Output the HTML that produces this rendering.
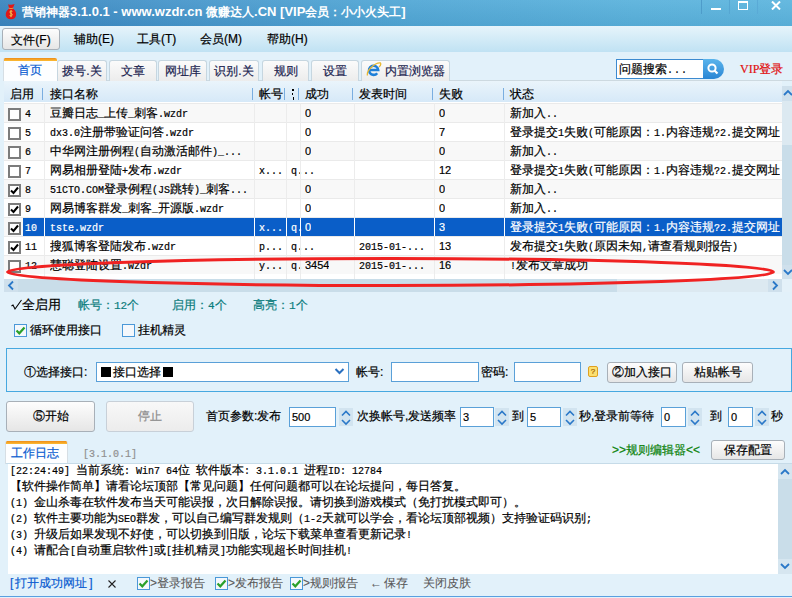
<!DOCTYPE html><html><head><meta charset="utf-8"><style>
*{box-sizing:border-box;margin:0;padding:0}
html,body{width:792px;height:598px;overflow:hidden}
body{position:relative;background:#e2f1fa;font-family:"Liberation Sans",sans-serif;font-size:12px;color:#000;-webkit-text-stroke-width:0.2px}
.a{position:absolute;white-space:nowrap}
.tt{font-size:13px}
.m{font-family:"Liberation Mono",monospace;font-size:10px}
.tab{top:60px;height:21px;border:1px solid #c6d6e0;border-bottom:none;border-radius:3px 3px 0 0;background:linear-gradient(#fbfbfb,#ececec);text-align:center;line-height:20px;color:#1c2450}
.mi{top:28px;height:22px;line-height:22px}
.hd{top:83px;height:20px;line-height:22px;color:#000}
.sep{top:88px;width:1px;height:12px;background:#7aaee0}
.row{left:4px;width:778px;height:19px;border-top:1px solid #eaeaea}
.cl{top:103px;width:1px;height:176px;background:#ececec}
.c{line-height:21px;height:19px;overflow:hidden}
.cb{width:13px;height:13px;border:2px solid #7c7c7c;background:#fff}
.btn{border:1px solid #a8b0b8;border-radius:3px;background:linear-gradient(#fdfdfd,#e6e6e6);text-align:center}
.inp{background:#fff;border:1px solid #5aa0d8}
.spin{width:14px;height:19px;background:#d0e4f0}
.log{font-family:"Liberation Sans",sans-serif;font-size:12px;line-height:16px;height:16px}
</style></head><body>
<div class="a" style="left:0;top:0;width:792px;height:26px;background:linear-gradient(rgba(255,255,255,0.06),rgba(0,40,80,0.06)),linear-gradient(to right,#3a86c0 0%,#4898cc 25%,#52a8d6 52%,#5ab2dc 80%,#5db5de 100%)"></div>
<svg class="a" style="left:5px;top:3px" width="12" height="17" viewBox="0 0 12 17"><path d="M3.2 1.2 Q6 2.4 9.6 1 L8.2 4.6 Q7.2 5.4 8.4 5.8 Q11.6 8.4 11 12.6 Q10.4 16.2 6 16.2 Q1.4 16.2 0.8 12.6 Q0.4 8.4 3.8 5.8 Q4.8 5.2 3.8 4.6 Z" fill="#e01818"/><path d="M3.8 5.2 Q6 6 8.2 5.2" stroke="#f0b040" stroke-width="0.8" fill="none"/><path d="M7.4 8.4 Q6 7.4 4.9 8.6 Q4.6 9.8 6 10.3 Q7.5 10.9 7.2 12.2 Q6.4 13.6 4.6 12.6 M6 7.2 V14.2" stroke="#f2c24a" stroke-width="1" fill="none"/></svg>
<div class="a" style="left:22px;top:4px;font-size:12px;font-weight:bold;color:#fff;line-height:16px;-webkit-text-stroke-width:0">营销神器<span class="tt">3.1.0.1 - www.wzdr.cn </span>微赚达人<span class="tt">.CN [VIP</span>会员：小小火头工<span class="tt">]</span></div>
<div class="a" style="left:701px;top:0;width:1px;height:14px;background:#4e9cca"></div>
<div class="a" style="left:729px;top:0;width:1px;height:14px;background:#56a6d2"></div>
<div class="a" style="left:757px;top:0;width:1px;height:14px;background:#5aaad6"></div>
<div class="a" style="left:711px;top:8px;width:10px;height:2px;background:#fff"></div>
<div class="a" style="left:738px;top:1px;width:10px;height:9px;border:1.5px solid #fff;border-top-width:2.5px"></div>
<svg class="a" style="left:771px;top:1px" width="10" height="9" viewBox="0 0 10 9"><path d="M1 0.5 L9 8.5 M9 0.5 L1 8.5" stroke="#fff" stroke-width="2"/></svg>
<div class="a" style="left:0;top:26px;width:792px;height:26px;background:linear-gradient(#e6f4fb,#c0e2f3)"></div>
<div class="a mi btn" style="left:2px;width:58px">文件(F)</div>
<div class="a mi" style="left:74px">辅助(E)</div>
<div class="a mi" style="left:137px">工具(T)</div>
<div class="a mi" style="left:200px">会员(M)</div>
<div class="a mi" style="left:267px">帮助(H)</div>
<div class="a" style="left:3px;top:80px;width:789px;height:1px;background:#cdd9e0"></div>
<div class="a" style="left:3px;top:58px;width:54px;height:23px;background:linear-gradient(#ee8c18 0,#fcbc34 3px,#fdfeff 3px);border-left:1px solid #d6dee4;border-radius:2px 2px 0 0;color:#0a5cd0;text-align:center;line-height:24px;padding-right:2px">首页</div>
<div class="a tab" style="left:57px;width:50px">拨号.关</div>
<div class="a tab" style="left:109px;width:48px">文章</div>
<div class="a tab" style="left:158px;width:49px">网址库</div>
<div class="a tab" style="left:209px;width:50px">识别.关</div>
<div class="a tab" style="left:262px;width:47px">规则</div>
<div class="a tab" style="left:311px;width:48px">设置</div>
<div class="a tab" style="left:361px;width:89px;text-align:left;padding-left:23px">内置浏览器</div>
<svg class="a" style="left:366px;top:61px" width="16" height="16" viewBox="0 0 16 16"><path d="M3.6 9 H12.2 A4.6 4.6 0 1 0 11.2 12.2" stroke="#1f7fd8" stroke-width="2.6" fill="none"/><path d="M1.5 14.5 Q0.5 11 5 6.5 Q10.5 1.5 14.5 2 Q15.5 3.5 13 6" stroke="#e8b830" stroke-width="1.3" fill="none"/></svg>
<div class="a" style="left:616px;top:59px;width:88px;height:20px;border:1px solid #3c8ad0;background:#fff;line-height:18px;padding-left:2px">问题搜索<span class="m" style="letter-spacing:1px">...</span></div>
<div class="a" style="left:703px;top:59px;width:21px;height:20px;border-radius:0 10px 10px 0;background:linear-gradient(#5ab4ec,#2a86d4)"></div>
<svg class="a" style="left:706px;top:62px" width="14" height="14" viewBox="0 0 14 14"><circle cx="6" cy="6" r="3.6" stroke="#fff" stroke-width="2" fill="none"/><path d="M8.5 8.5 L11.5 11.5" stroke="#fff" stroke-width="2.2"/></svg>
<div class="a" style="left:740px;top:61px;color:#e01010;line-height:16px"><span style="font-family:'Liberation Serif',serif;font-size:12px">VIP</span>登录</div>
<div class="a" style="left:4px;top:81px;width:778px;height:21px;background:linear-gradient(#eaf4fb,#d6e9f8)"></div>
<div class="a hd" style="left:10px">启用</div>
<div class="a hd" style="left:50px">接口名称</div>
<div class="a hd" style="left:259px">帐号</div>
<div class="a hd" style="left:305px">成功</div>
<div class="a hd" style="left:359px">发表时间</div>
<div class="a hd" style="left:439px">失败</div>
<div class="a hd" style="left:510px">状态</div>
<div class="a sep" style="left:42px"></div>
<div class="a sep" style="left:252px"></div>
<div class="a sep" style="left:284px"></div>
<div class="a sep" style="left:298px"></div>
<div class="a sep" style="left:352px"></div>
<div class="a sep" style="left:432px"></div>
<div class="a sep" style="left:503px"></div>
<div class="a" style="left:292px;top:89px;width:2px;height:2px;background:#000"></div>
<div class="a" style="left:292px;top:93px;width:1px;height:2px;background:#000"></div>
<div class="a" style="left:293px;top:97px;width:1px;height:3px;background:#000"></div>
<div class="a" style="left:4px;top:102px;width:778px;height:177px;background:#fff"></div>
<div class="a row" style="top:103px;background:#f8f8f8"></div>
<div class="a cb" style="left:8px;top:108px"></div>
<div class="a c" style="left:25px;top:103px;color:#000"><span class="m">4</span></div>
<div class="a c" style="left:50px;top:103px;color:#000">豆瓣日志<span class="m">_</span>上传<span class="m">_</span>刺客<span class="m">.wzdr</span></div>
<div class="a c" style="left:305px;top:103px;color:#000;font-size:11px">0</div>
<div class="a c" style="left:439px;top:103px;color:#000;font-size:11px">0</div>
<div class="a c" style="left:510px;top:103px;color:#000">新加入<span class="m">..</span></div>
<div class="a row" style="top:122px;background:#fff"></div>
<div class="a cb" style="left:8px;top:127px"></div>
<div class="a c" style="left:25px;top:122px;color:#000"><span class="m">5</span></div>
<div class="a c" style="left:50px;top:122px;color:#000"><span class="m">dx3.0</span>注册带验证问答<span class="m">.wzdr</span></div>
<div class="a c" style="left:305px;top:122px;color:#000;font-size:11px">0</div>
<div class="a c" style="left:439px;top:122px;color:#000;font-size:11px">7</div>
<div class="a c" style="left:510px;top:122px;color:#000">登录提交<span class="m">1</span>失败<span class="m">(</span>可能原因：<span class="m">1.</span>内容违规<span class="m">?2.</span>提交网址</div>
<div class="a row" style="top:141px;background:#f8f8f8"></div>
<div class="a cb" style="left:8px;top:146px"></div>
<div class="a c" style="left:25px;top:141px;color:#000"><span class="m">6</span></div>
<div class="a c" style="left:50px;top:141px;color:#000">中华网注册例程<span class="m">(</span>自动激活邮件<span class="m">)_...</span></div>
<div class="a c" style="left:305px;top:141px;color:#000;font-size:11px">0</div>
<div class="a c" style="left:439px;top:141px;color:#000;font-size:11px">0</div>
<div class="a c" style="left:510px;top:141px;color:#000">新加入<span class="m">..</span></div>
<div class="a row" style="top:160px;background:#fff"></div>
<div class="a cb" style="left:8px;top:165px"></div>
<div class="a c" style="left:25px;top:160px;color:#000"><span class="m">7</span></div>
<div class="a c" style="left:50px;top:160px;color:#000">网易相册登陆<span class="m">+</span>发布<span class="m">.wzdr</span></div>
<div class="a c" style="left:259px;top:160px;color:#000"><span class="m">x...</span></div>
<div class="a c" style="left:291px;top:160px;color:#000"><span class="m">q...</span></div>
<div class="a c" style="left:439px;top:160px;color:#000;font-size:11px">12</div>
<div class="a c" style="left:510px;top:160px;color:#000">登录提交<span class="m">1</span>失败<span class="m">(</span>可能原因：<span class="m">1.</span>内容违规<span class="m">?2.</span>提交网址</div>
<div class="a row" style="top:179px;background:#f8f8f8"></div>
<div class="a cb" style="left:8px;top:184px"></div>
<svg class="a" style="left:9px;top:185px" width="11" height="11" viewBox="0 0 11 11"><path d="M2 5.5 L4.5 8 L9 2.5" stroke="#000" stroke-width="2" fill="none"/></svg>
<div class="a c" style="left:25px;top:179px;color:#000"><span class="m">8</span></div>
<div class="a c" style="left:50px;top:179px;color:#000"><span class="m">51CTO.COM</span>登录例程<span class="m">(JS</span>跳转<span class="m">)_</span>刺客<span class="m">...</span></div>
<div class="a c" style="left:305px;top:179px;color:#000;font-size:11px">0</div>
<div class="a c" style="left:439px;top:179px;color:#000;font-size:11px">0</div>
<div class="a c" style="left:510px;top:179px;color:#000">新加入<span class="m">..</span></div>
<div class="a row" style="top:198px;background:#fff"></div>
<div class="a cb" style="left:8px;top:203px"></div>
<svg class="a" style="left:9px;top:204px" width="11" height="11" viewBox="0 0 11 11"><path d="M2 5.5 L4.5 8 L9 2.5" stroke="#000" stroke-width="2" fill="none"/></svg>
<div class="a c" style="left:25px;top:198px;color:#000"><span class="m">9</span></div>
<div class="a c" style="left:50px;top:198px;color:#000">网易博客群发<span class="m">_</span>刺客<span class="m">_</span>开源版<span class="m">.wzdr</span></div>
<div class="a c" style="left:305px;top:198px;color:#000;font-size:11px">0</div>
<div class="a c" style="left:439px;top:198px;color:#000;font-size:11px">0</div>
<div class="a c" style="left:510px;top:198px;color:#000">新加入<span class="m">..</span></div>
<div class="a row" style="top:217px;background:#f8f8f8"></div>
<div class="a" style="left:23px;top:218px;width:759px;height:18px;background:#0a5ec8"></div>
<div class="a cb" style="left:8px;top:222px"></div>
<svg class="a" style="left:9px;top:223px" width="11" height="11" viewBox="0 0 11 11"><path d="M2 5.5 L4.5 8 L9 2.5" stroke="#000" stroke-width="2" fill="none"/></svg>
<div class="a c" style="left:25px;top:217px;color:#fff"><span class="m">10</span></div>
<div class="a c" style="left:50px;top:217px;color:#fff"><span class="m">tste.wzdr</span></div>
<div class="a c" style="left:259px;top:217px;color:#fff"><span class="m">x...</span></div>
<div class="a c" style="left:291px;top:217px;color:#fff"><span class="m">q.</span></div>
<div class="a c" style="left:305px;top:217px;color:#fff;font-size:11px">0</div>
<div class="a c" style="left:439px;top:217px;color:#fff;font-size:11px">3</div>
<div class="a c" style="left:510px;top:217px;color:#fff">登录提交<span class="m">1</span>失败<span class="m">(</span>可能原因：<span class="m">1.</span>内容违规<span class="m">?2.</span>提交网址</div>
<div class="a row" style="top:236px;background:#fff"></div>
<div class="a cb" style="left:8px;top:241px"></div>
<svg class="a" style="left:9px;top:242px" width="11" height="11" viewBox="0 0 11 11"><path d="M2 5.5 L4.5 8 L9 2.5" stroke="#000" stroke-width="2" fill="none"/></svg>
<div class="a c" style="left:25px;top:236px;color:#000"><span class="m">11</span></div>
<div class="a c" style="left:50px;top:236px;color:#000">搜狐博客登陆发布<span class="m">.wzdr</span></div>
<div class="a c" style="left:259px;top:236px;color:#000"><span class="m">p...</span></div>
<div class="a c" style="left:291px;top:236px;color:#000"><span class="m">q...</span></div>
<div class="a c" style="left:359px;top:236px;color:#000"><span class="m">2015-01-...</span></div>
<div class="a c" style="left:439px;top:236px;color:#000;font-size:11px">13</div>
<div class="a c" style="left:510px;top:236px;color:#000">发布提交<span class="m">1</span>失败<span class="m">(</span>原因未知<span class="m">,</span>请查看规则报告<span class="m">)</span></div>
<div class="a row" style="top:255px;background:#f8f8f8"></div>
<div class="a cb" style="left:8px;top:260px"></div>
<div class="a c" style="left:25px;top:255px;color:#000"><span class="m">12</span></div>
<div class="a c" style="left:50px;top:255px;color:#000">慧聪登陆设置<span class="m">.wzdr</span></div>
<div class="a c" style="left:259px;top:255px;color:#000"><span class="m">y...</span></div>
<div class="a c" style="left:291px;top:255px;color:#000"><span class="m">q.</span></div>
<div class="a c" style="left:305px;top:255px;color:#000;font-size:11px">3454</div>
<div class="a c" style="left:359px;top:255px;color:#000"><span class="m">2015-01-...</span></div>
<div class="a c" style="left:439px;top:255px;color:#000;font-size:11px">16</div>
<div class="a c" style="left:510px;top:255px;color:#000"><span class="m">!</span>发布文章成功</div>
<div class="a cl" style="left:44px"></div>
<div class="a cl" style="left:254px"></div>
<div class="a cl" style="left:286px"></div>
<div class="a cl" style="left:300px"></div>
<div class="a cl" style="left:354px"></div>
<div class="a cl" style="left:434px"></div>
<div class="a cl" style="left:504px"></div>
<div class="a" style="left:44px;top:218px;width:1px;height:18px;background:#fff"></div>
<div class="a" style="left:254px;top:218px;width:1px;height:18px;background:#fff"></div>
<div class="a" style="left:286px;top:218px;width:1px;height:18px;background:#fff"></div>
<div class="a" style="left:300px;top:218px;width:1px;height:18px;background:#fff"></div>
<div class="a" style="left:354px;top:218px;width:1px;height:18px;background:#fff"></div>
<div class="a" style="left:434px;top:218px;width:1px;height:18px;background:#fff"></div>
<div class="a" style="left:504px;top:218px;width:1px;height:18px;background:#fff"></div>
<div class="a" style="left:4px;top:279px;width:778px;height:13px;background:#dce9f1"></div>
<div class="a" style="left:18px;top:279px;width:599px;height:13px;background:#c9dde9"></div>
<div class="a" style="left:4px;top:279px;width:14px;height:13px;background:#cfe0ec"></div>
<svg class="a" style="left:4px;top:279px" width="14" height="13" viewBox="0 0 14 13"><path d="M9 2.5 L5 6.5 L9 10.5" stroke="#2a78c8" stroke-width="1.8" fill="none"/></svg>
<div class="a" style="left:768px;top:279px;width:14px;height:13px;background:#cfe0ec"></div>
<svg class="a" style="left:768px;top:279px" width="14" height="13" viewBox="0 0 14 13"><path d="M5 2.5 L9 6.5 L5 10.5" stroke="#2a78c8" stroke-width="1.8" fill="none"/></svg>
<div class="a" style="left:782px;top:86px;width:10px;height:193px;background:#dce9f1"></div>
<div class="a" style="left:782px;top:145px;width:10px;height:120px;background:#c9dde9"></div>
<div class="a" style="left:782px;top:86px;width:10px;height:15px;background:#cfe0ec"></div>
<div class="a" style="left:782px;top:265px;width:10px;height:14px;background:#cfe0ec"></div>
<div class="a" style="left:782px;top:279px;width:10px;height:13px;background:#e4f1f9"></div>
<svg class="a" style="left:782px;top:86px" width="10" height="15" viewBox="0 0 10 15"><path d="M2 9 L6 5 L10 9" stroke="#2a78c8" stroke-width="1.8" fill="none"/></svg>
<svg class="a" style="left:782px;top:265px" width="10" height="14" viewBox="0 0 10 14"><path d="M2 5 L6 9 L10 5" stroke="#2a78c8" stroke-width="1.8" fill="none"/></svg>
<svg class="a" style="left:11px;top:299px" width="11" height="12" viewBox="0 0 11 12"><path d="M0.5 7 L2 6 L4 10 L10.5 1" stroke="#000" stroke-width="1.1" fill="none"/></svg>
<div class="a" style="left:22px;top:296px;line-height:18px;font-size:12.5px">全启用</div>
<div class="a" style="left:78px;top:296px;line-height:18px;color:#0a7c7c">帐号：<span class="m" style="font-size:11px">12</span>个</div>
<div class="a" style="left:172px;top:296px;line-height:18px;color:#0a7c7c">启用：<span class="m" style="font-size:11px">4</span>个</div>
<div class="a" style="left:253px;top:296px;line-height:18px;color:#0a7c7c">高亮：<span class="m" style="font-size:11px">1</span>个</div>
<div class="a" style="left:14px;top:324px;width:13px;height:13px;border:1px solid #4a98d8;background:#f4f8fc"></div>
<svg class="a" style="left:15px;top:325px" width="11" height="11" viewBox="0 0 11 11"><path d="M1.5 5.5 L4.3 8.3 L9.5 2.5" stroke="#2aa02a" stroke-width="2.2" fill="none"/></svg>
<div class="a" style="left:30px;top:321px;line-height:18px">循环使用接口</div>
<div class="a" style="left:122px;top:324px;width:13px;height:13px;border:1px solid #4a98d8;background:#f4f8fc"></div>
<div class="a" style="left:138px;top:321px;line-height:18px">挂机精灵</div>
<div class="a" style="left:6px;top:348px;width:786px;height:44px;border:1px solid #46a8e0"></div>
<div class="a" style="left:24px;top:363px;line-height:18px">①选择接口:</div>
<div class="a inp" style="left:96px;top:362px;width:253px;height:20px;line-height:18px;padding-left:4px"><span style="display:inline-block;width:10px;height:10px;background:#000;vertical-align:-1px;margin-right:2px"></span>接口选择<span style="display:inline-block;width:10px;height:10px;background:#000;vertical-align:-1px;margin-left:2px"></span></div>
<svg class="a" style="left:334px;top:367px" width="11" height="9" viewBox="0 0 11 9"><path d="M1.5 2 L5.5 6 L9.5 2" stroke="#2a70c0" stroke-width="2" fill="none"/></svg>
<div class="a" style="left:356px;top:363px;line-height:18px">帐号:</div>
<div class="a inp" style="left:391px;top:362px;width:88px;height:20px"></div>
<div class="a" style="left:481px;top:363px;line-height:18px">密码:</div>
<div class="a inp" style="left:514px;top:362px;width:67px;height:20px"></div>
<div class="a" style="left:588px;top:366px;width:10px;height:11px;border:1px solid #e0a020;border-radius:2px;background:#fce070;font-size:8px;line-height:9px;text-align:center;color:#a06000">?</div>
<div class="a btn" style="left:607px;top:362px;width:70px;height:21px;line-height:19px">②加入接口</div>
<div class="a btn" style="left:682px;top:362px;width:71px;height:21px;line-height:19px">粘贴帐号</div>
<div class="a btn" style="left:6px;top:401px;width:89px;height:31px;line-height:29px">⑤开始</div>
<div class="a btn" style="left:106px;top:401px;width:88px;height:31px;line-height:29px;color:#8c8c8c;border-color:#c8d0d8;background:linear-gradient(#f8f8f8,#ececec)">停止</div>
<div class="a" style="left:206px;top:407px;line-height:18px">首页参数:发布</div>
<div class="a inp" style="left:289px;top:407px;width:47px;height:20px;line-height:19px;padding-left:2px;font-size:11px">500</div>
<div class="a spin" style="left:339px;top:408px;height:9px;background:#d2e4f0"></div>
<div class="a spin" style="left:339px;top:417px;height:9px;background:#d2e4f0"></div>
<svg class="a" style="left:339px;top:408px" width="14" height="19" viewBox="0 0 14 19"><path d="M3 7.5 L7 3.5 L11 7.5 M3 12 L7 16 L11 12" stroke="#2a78c8" stroke-width="1.6" fill="none"/></svg>
<div class="a" style="left:357px;top:407px;line-height:18px">次换帐号,发送频率</div>
<div class="a inp" style="left:460px;top:407px;width:34px;height:20px;line-height:19px;padding-left:2px;font-size:11px">3</div>
<div class="a spin" style="left:495px;top:408px;height:9px;background:#d2e4f0"></div>
<div class="a spin" style="left:495px;top:417px;height:9px;background:#d2e4f0"></div>
<svg class="a" style="left:495px;top:408px" width="14" height="19" viewBox="0 0 14 19"><path d="M3 7.5 L7 3.5 L11 7.5 M3 12 L7 16 L11 12" stroke="#2a78c8" stroke-width="1.6" fill="none"/></svg>
<div class="a" style="left:512px;top:407px;line-height:18px">到</div>
<div class="a inp" style="left:527px;top:407px;width:34px;height:20px;line-height:19px;padding-left:2px;font-size:11px">5</div>
<div class="a spin" style="left:563px;top:408px;height:9px;background:#d2e4f0"></div>
<div class="a spin" style="left:563px;top:417px;height:9px;background:#d2e4f0"></div>
<svg class="a" style="left:563px;top:408px" width="14" height="19" viewBox="0 0 14 19"><path d="M3 7.5 L7 3.5 L11 7.5 M3 12 L7 16 L11 12" stroke="#2a78c8" stroke-width="1.6" fill="none"/></svg>
<div class="a" style="left:579px;top:407px;line-height:18px">秒,登录前等待</div>
<div class="a inp" style="left:661px;top:407px;width:25px;height:20px;line-height:19px;padding-left:2px;font-size:11px">0</div>
<div class="a spin" style="left:688px;top:408px;height:9px;background:#d2e4f0"></div>
<div class="a spin" style="left:688px;top:417px;height:9px;background:#d2e4f0"></div>
<svg class="a" style="left:688px;top:408px" width="14" height="19" viewBox="0 0 14 19"><path d="M3 7.5 L7 3.5 L11 7.5 M3 12 L7 16 L11 12" stroke="#2a78c8" stroke-width="1.6" fill="none"/></svg>
<div class="a" style="left:710px;top:407px;line-height:18px">到</div>
<div class="a inp" style="left:728px;top:407px;width:25px;height:20px;line-height:19px;padding-left:2px;font-size:11px">0</div>
<div class="a spin" style="left:755px;top:408px;height:9px;background:#d2e4f0"></div>
<div class="a spin" style="left:755px;top:417px;height:9px;background:#d2e4f0"></div>
<svg class="a" style="left:755px;top:408px" width="14" height="19" viewBox="0 0 14 19"><path d="M3 7.5 L7 3.5 L11 7.5 M3 12 L7 16 L11 12" stroke="#2a78c8" stroke-width="1.6" fill="none"/></svg>
<div class="a" style="left:771px;top:407px;line-height:18px">秒</div>
<div class="a" style="left:5px;top:441px;width:63px;height:23px;background:linear-gradient(#ee8c18 0,#fcbc34 3px,#fdfeff 3px);border-left:1px solid #d6dee4;border-right:1px solid #d6dee4;border-radius:2px 2px 0 0;color:#0a5cd0;text-align:left;padding-left:5px;line-height:24px;font-size:12px">工作日志</div>
<div class="a" style="left:83px;top:444px;line-height:18px;color:#909090"><span class="m">[3.1.0.1]</span></div>
<div class="a" style="left:612px;top:441px;line-height:18px;color:#0a820a">&gt;&gt;规则编辑器&lt;&lt;</div>
<div class="a btn" style="left:711px;top:440px;width:74px;height:20px;line-height:18px">保存配置</div>
<div class="a" style="left:6px;top:463px;width:786px;height:1px;background:#c6dbe8"></div>
<div class="a" style="left:8px;top:464px;width:770px;height:110px;background:#fff"></div>
<div class="a log" style="left:10px;top:462px"><span class="m">[22:24:49] </span>当前系统<span class="m">: Win7 64</span>位<span class="m"> </span>软件版本<span class="m">: 3.1.0.1 </span>进程<span class="m">ID: 12784</span></div>
<div class="a log" style="left:10px;top:478px">【软件操作简单】请看论坛顶部【常见问题】任何问题都可以在论坛提问，每日答复。</div>
<div class="a log" style="left:10px;top:494px"><span class="m">(1) </span>金山杀毒在软件发布当天可能误报，次日解除误报。请切换到游戏模式（免打扰模式即可）。</div>
<div class="a log" style="left:10px;top:510px"><span class="m">(2) </span>软件主要功能为<span class="m">SEO</span>群发，可以自己编写群发规则（<span class="m">1-2</span>天就可以学会，看论坛顶部视频）支持验证码识别<span class="m">;</span></div>
<div class="a log" style="left:10px;top:526px"><span class="m">(3) </span>升级后如果发现不好使，可以切换到旧版，论坛下载菜单查看更新记录<span class="m">!</span></div>
<div class="a log" style="left:10px;top:542px"><span class="m">(4) </span>请配合<span class="m">[</span>自动重启软件<span class="m">]</span>或<span class="m">[</span>挂机精灵<span class="m">]</span>功能实现超长时间挂机<span class="m">!</span></div>
<div class="a" style="left:778px;top:464px;width:14px;height:110px;background:#c9dde9"></div>
<div class="a" style="left:778px;top:464px;width:14px;height:15px;background:#d6e6f0"></div>
<div class="a" style="left:778px;top:559px;width:14px;height:15px;background:#d6e6f0"></div>
<svg class="a" style="left:778px;top:465px" width="14" height="14" viewBox="0 0 14 14"><path d="M3 9 L7 5 L11 9" stroke="#2a78c8" stroke-width="1.8" fill="none"/></svg>
<svg class="a" style="left:778px;top:559px" width="14" height="14" viewBox="0 0 14 14"><path d="M3 5 L7 9 L11 5" stroke="#2a78c8" stroke-width="1.8" fill="none"/></svg>
<div class="a" style="left:10px;top:574px;line-height:18px;color:#0a5cd0">[<span style="margin:0 2px">打开成功网址</span>]</div>
<svg class="a" style="left:107px;top:579px" width="10" height="10" viewBox="0 0 10 10"><path d="M1.5 1.5 L8.5 8.5 M8.5 1.5 L1.5 8.5" stroke="#222" stroke-width="1.1"/></svg>
<div class="a" style="left:137px;top:577px;width:13px;height:13px;border:1px solid #4a98d8;background:#f4f8fc"></div>
<svg class="a" style="left:138px;top:578px" width="11" height="11" viewBox="0 0 11 11"><path d="M1.5 5.5 L4.3 8.3 L9.5 2.5" stroke="#2aa02a" stroke-width="2.2" fill="none"/></svg>
<div class="a" style="left:150px;top:574px;line-height:18px;color:#5a5a5a;-webkit-text-stroke-width:0.1px">&gt;登录报告</div>
<div class="a" style="left:215px;top:577px;width:13px;height:13px;border:1px solid #4a98d8;background:#f4f8fc"></div>
<svg class="a" style="left:216px;top:578px" width="11" height="11" viewBox="0 0 11 11"><path d="M1.5 5.5 L4.3 8.3 L9.5 2.5" stroke="#2aa02a" stroke-width="2.2" fill="none"/></svg>
<div class="a" style="left:228px;top:574px;line-height:18px;color:#5a5a5a;-webkit-text-stroke-width:0.1px">&gt;发布报告</div>
<div class="a" style="left:290px;top:577px;width:13px;height:13px;border:1px solid #4a98d8;background:#f4f8fc"></div>
<svg class="a" style="left:291px;top:578px" width="11" height="11" viewBox="0 0 11 11"><path d="M1.5 5.5 L4.3 8.3 L9.5 2.5" stroke="#2aa02a" stroke-width="2.2" fill="none"/></svg>
<div class="a" style="left:303px;top:574px;line-height:18px;color:#5a5a5a;-webkit-text-stroke-width:0.1px">&gt;规则报告</div>
<div class="a" style="left:370px;top:574px;line-height:18px;color:#5a5a5a;-webkit-text-stroke-width:0.1px"><span style="display:inline-block;width:14px;text-align:left">←</span>保存</div>
<div class="a" style="left:423px;top:574px;line-height:18px;color:#5a5a5a;-webkit-text-stroke-width:0.1px">关闭皮肤</div>
<div class="a" style="left:0;top:596px;width:792px;height:1px;background:#5aa0e0"></div>
<div class="a" style="left:0;top:597px;width:792px;height:1px;background:#e8f0f8"></div>
<svg class="a" style="left:0;top:0" width="792" height="598"><ellipse cx="390.5" cy="272" rx="383" ry="13.5" fill="none" stroke="#f02222" stroke-width="3"/></svg>
</body></html>
